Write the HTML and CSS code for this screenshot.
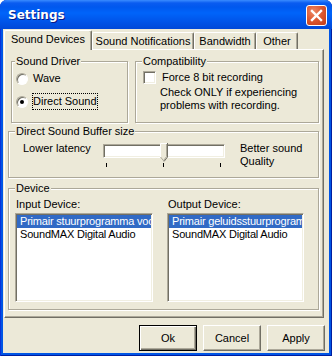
FILE: index.html
```html
<!DOCTYPE html>
<html lang="en">
<head>
    <meta charset="UTF-8">
    <title>Settings</title>
    <link rel="stylesheet" href="styles.css">
</head>
<body>
    <div class="window">
        <div class="titlebar">
            <span class="title">Settings</span>
            <span class="close">
                <svg width="19" height="19" viewBox="0 0 19 19">
                    <path d="M5 5 L14 14 M14 5 L5 14" stroke="#fff" stroke-width="2.4" stroke-linecap="square"/>
                </svg>
            </span>
        </div>

        <div class="frame">
            <div class="tabs">
                <div class="tab active tab-devices">Sound Devices</div>
                <div class="tab tab-notify">Sound Notifications</div>
                <div class="tab tab-band">Bandwidth</div>
                <div class="tab tab-other">Other</div>
            </div>

            <div class="panel">
                <div class="top-row">
                    <div class="group driver">
                        <div class="legend">Sound Driver</div>
                        <div class="radio-row wave">
                            <span class="radio"></span>
                            <span class="radio-label">Wave</span>
                        </div>
                        <div class="radio-row direct">
                            <span class="radio checked"></span>
                            <span class="radio-label focused">Direct Sound</span>
                        </div>
                    </div>

                    <div class="group compat">
                        <div class="legend">Compatibility</div>
                        <div class="check-row">
                            <span class="checkbox"></span>
                            <span>Force 8 bit recording</span>
                        </div>
                        <p class="note">Check ONLY if experiencing<br>problems with recording.</p>
                    </div>
                </div>

                <div class="group buffer">
                    <div class="legend">Direct Sound Buffer size</div>
                    <div class="slider-row">
                        <span class="slider-low">Lower latency</span>
                        <div class="slider">
                            <div class="track"></div>
                            <svg class="thumb" width="8" height="19" viewBox="0 0 8 19">
                                <path d="M0.5 0.5 H7.5 V14 L4 18.5 L0.5 14 Z" fill="#ECE9D8"/>
                                <path d="M0.5 14 V0.5 H7" stroke="#fff" fill="none"/>
                                <path d="M7.5 0 V14 L4 18.5" stroke="#716F64" fill="none"/>
                                <path d="M6.5 1 V13.6 L4 17" stroke="#ACA899" fill="none"/>
                                <path d="M0.5 14 L3.8 18" stroke="#ACA899" fill="none"/>
                            </svg>
                            <div class="ticks">
                                <span class="tick"></span>
                                <span class="tick"></span>
                                <span class="tick"></span>
                            </div>
                        </div>
                        <span class="slider-high">Better sound<br>Quality</span>
                    </div>
                </div>

                <div class="group device">
                    <div class="legend">Device</div>
                    <div class="device-cols">
                        <div class="device-col input">
                            <div class="device-label">Input Device:</div>
                            <ul class="listbox">
                                <li class="selected">Primair stuurprogramma voo</li>
                                <li>SoundMAX Digital Audio</li>
                            </ul>
                        </div>
                        <div class="device-col output">
                            <div class="device-label">Output Device:</div>
                            <ul class="listbox">
                                <li class="selected">Primair geluidsstuurprogramm</li>
                                <li>SoundMAX Digital Audio</li>
                            </ul>
                        </div>
                    </div>
                </div>
            </div>

            <div class="buttons">
                <button class="btn default">Ok</button>
                <button class="btn">Cancel</button>
                <button class="btn">Apply</button>
            </div>
        </div>
    </div>
</body>
</html>
```

FILE: styles.css
```css
* {
    box-sizing: border-box;
    margin: 0;
    padding: 0;
}
body {
    width: 332px;
    height: 356px;
    overflow: hidden;
    font-family: 'Liberation Sans', Arial, sans-serif;
    font-size: 11px;
    line-height: 13px;
    color: #000000;
    background-color: #FFFFFF;
}
.window {
    width: 332px;
    height: 356px;
    display: flex;
    flex-direction: column;
    background-color: #0055E5;
    border-radius: 7px 7px 0 0;
    box-shadow: inset 1px 0 #0831D9, inset -1px 0 #001EA0, inset 0 -1px #001EA0;
}
.titlebar {
    height: 29px;
    flex: none;
    display: flex;
    align-items: center;
    justify-content: space-between;
    padding: 0 5px 0 8px;
    border-radius: 7px 7px 0 0;
    background: linear-gradient(#3A8CFF 0, #0A5CF0 3px, #0058EE 7px, #0064FA 13px, #0057EC 20px, #0048D8 29px);
}
.title {
    font-family: 'DejaVu Sans', sans-serif;
    font-weight: bold;
    font-size: 12px;
    color: #FFFFFF;
    text-shadow: 1px 1px #0A1883;
    padding-top: 2px;
}
.close {
    width: 21px;
    height: 21px;
    margin-top: 2px;
    border: 1px solid #FFFFFF;
    border-radius: 3px;
    background: radial-gradient(circle at 35% 30%, #EE8A66 0, #DD5A33 45%, #C23A16 100%);
    display: flex;
    align-items: center;
    justify-content: center;
}
.frame {
    flex: 1;
    margin: 0 3px 3px;
    background-color: #ECE9D8;
    display: flex;
    flex-direction: column;
    padding: 1px 4px 0 1px;
}

/* tabs */
.tabs {
    height: 19px;
    display: flex;
    align-items: flex-end;
    position: relative;
    z-index: 1;
}
.tab {
    height: 17px;
    padding-top: 2px;
    text-align: center;
    white-space: nowrap;
    border-top: 1px solid #FFFFFF;
    border-left: 1px solid #FFFFFF;
    border-right: 1px solid #716F64;
    border-radius: 2px 2px 0 0;
    box-shadow: inset -1px 0 #ACA899;
    background-color: #ECE9D8;
}
.tab.active {
    height: 20px;
    margin-bottom: -1px;
    padding-top: 2px;
}
.tab-devices { width: 88px; }
.tab-notify { width: 102px; }
.tab-band { width: 62px; }
.tab-other { width: 42px; }

.panel {
    width: 320px;
    height: 269px;
    flex: none;
    border-top: 1px solid #FFFFFF;
    border-left: 1px solid #FFFFFF;
    border-right: 1px solid #716F64;
    border-bottom: 1px solid #716F64;
    box-shadow: inset -1px -1px #ACA899;
}

/* group boxes */
.group {
    border: 1px solid #ACA899;
    box-shadow: inset 1px 1px #FFFFFF, 1px 1px 0 #FFFFFF;
}
.legend {
    width: fit-content;
    margin: -7px 0 0 6px;
    padding: 0 1px;
    background-color: #ECE9D8;
}
.top-row {
    display: flex;
    margin: 11px 0 0 6px;
}
.driver {
    width: 117px;
    height: 62px;
}
.driver .legend {
    margin-left: 3px;
}
.compat {
    width: 184px;
    height: 62px;
    margin-left: 7px;
}
.radio-row {
    display: flex;
    align-items: center;
    height: 17px;
    padding-left: 4px;
}
.radio-row.wave {
    margin-top: 2px;
}
.radio-row.direct {
    margin-top: 6px;
}
.radio {
    width: 12px;
    height: 12px;
    border-radius: 50%;
    background-color: #FFFFFF;
    border: 1px solid;
    border-color: #ACA899 #FFFFFF #FFFFFF #ACA899;
    box-shadow: inset 1px 1px #716F64;
    display: flex;
    align-items: center;
    justify-content: center;
}
.radio.checked::after {
    content: "";
    width: 4px;
    height: 4px;
    border-radius: 50%;
    background-color: #000000;
}
.radio-label {
    margin-left: 4px;
    padding: 1px 0;
    border: 1px solid transparent;
}
.radio-label.focused {
    border: 1px dotted #000000;
}
.check-row {
    display: flex;
    align-items: center;
    margin-top: 3px;
    padding-left: 7px;
}
.checkbox {
    width: 13px;
    height: 13px;
    margin-right: 6px;
    background-color: #FFFFFF;
    border: 1px solid;
    border-color: #ACA899 #FFFFFF #FFFFFF #ACA899;
    box-shadow: inset 1px 1px #716F64, inset -1px -1px #F1EFE2;
}
.note {
    margin: 2px 0 0 24px;
}

/* buffer slider */
.buffer {
    width: 311px;
    height: 47px;
    margin: 8px 0 0 3px;
}
.slider-row {
    display: flex;
    margin-top: 4px;
    padding-left: 14px;
}
.slider-low {
    width: 80px;
}
.slider {
    width: 122px;
    margin-top: 2px;
    position: relative;
}
.track {
    height: 14px;
    background-color: #FFFFFF;
    border: 1px solid;
    border-color: #ACA899 #FFFFFF #FFFFFF #ACA899;
    box-shadow: inset 1px 1px #716F64, inset -1px -1px #F1EFE2;
}
.thumb {
    position: absolute;
    left: 57px;
    top: -1px;
}
.ticks {
    display: flex;
    justify-content: space-between;
    margin-top: 5px;
    padding: 0 4px 0 3px;
}
.tick {
    width: 1px;
    height: 4px;
    background-color: #000000;
}
.slider-high {
    margin-left: 15px;
}

/* device lists */
.device {
    width: 311px;
    height: 122px;
    margin: 10px 0 0 3px;
}
.device-cols {
    display: flex;
    gap: 14px;
    margin-top: 3px;
    padding-left: 6px;
}
.device-col.input {
    width: 138px;
}
.device-col.output {
    width: 137px;
}
.device-label {
    margin-left: 1px;
}
.listbox {
    list-style: none;
    height: 89px;
    margin-top: 2px;
    background-color: #FFFFFF;
    border: 1px solid;
    border-color: #ACA899 #FFFFFF #FFFFFF #ACA899;
    box-shadow: inset 1px 1px #716F64, inset -1px -1px #F1EFE2;
    padding: 1px;
    overflow: hidden;
}
.listbox li {
    height: 13px;
    padding-left: 3px;
    letter-spacing: -0.2px;
    white-space: nowrap;
    overflow: hidden;
}
.listbox li.selected {
    background-color: #316AC5;
    color: #FFFFFF;
}

/* dialog buttons */
.buttons {
    display: flex;
    justify-content: flex-end;
    gap: 6px;
    margin-top: 7px;
}
.btn {
    width: 58px;
    height: 26px;
    font-family: inherit;
    font-size: 11px;
    color: #000000;
    background-color: #ECE9D8;
    border: 1px solid;
    border-color: #FFFFFF #716F64 #716F64 #FFFFFF;
    box-shadow: inset -1px -1px #ACA899;
}
.btn.default {
    border: 1px solid #000000;
    box-shadow: inset 1px 1px #FFFFFF, inset -1px -1px #716F64, inset -2px -2px #ACA899;
}
```
